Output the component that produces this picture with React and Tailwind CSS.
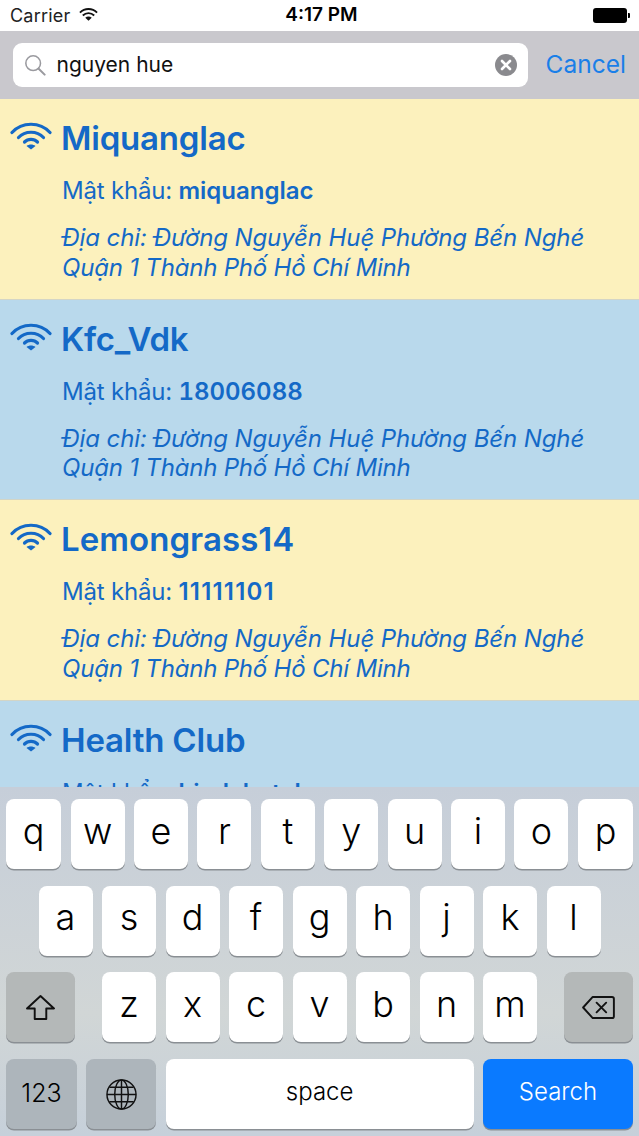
const FONT = "font-['Inter','Noto_Sans',sans-serif]";

function Wifi({ className }) {
  return (
    <svg viewBox="0 0 42 28" className={className} fill="none" stroke="currentColor" strokeWidth="3.200" strokeLinecap="round">
      <path d="M2 10.500 C12 -0.500 30 -0.500 40 10.500" />
      <path d="M8.500 15.500 C15 8.500 27 8.500 33.500 15.500" />
      <path d="M14.500 20 C18 16.500 24 16.500 27.500 20" />
      <path d="M21 27.500 L16.500 24 C19 22 23 22 25.500 24 Z" fill="currentColor" stroke="none" />
    </svg>
  );
}

function Row({ bg, name, pass, passClass = "tracking-normal", nameClass = "tracking-[-0.2px]" }) {
  return (
    <div className={`${bg} h-[200.7px] shrink-0 pl-[10px] pt-[19px] flex gap-[10px] border-b border-[#d3d5c6]`}>
      <Wifi className="w-[42px] h-[28px] mt-[4px] text-[#1469c7] shrink-0" />
      <div className="text-[#1469c7]">
        <div className={`text-[33px] leading-[40px] font-semibold -ml-[1px] ${nameClass}`}>{name}</div>
        <div className="text-[24px] leading-[30px] mt-[18px] tracking-[-0.2px]">
          Mật khẩu: <span className={`font-semibold ${passClass}`}>{pass}</span>
        </div>
        <div className="text-[24px] leading-[29.500px] italic mt-[17px] tracking-[-0.1px]">
          <div>Địa chỉ: Đường Nguyễn Huệ Phường Bến Nghé</div>
          <div className="tracking-[-0.2px]">Quận 1 Thành Phố Hồ Chí Minh</div>
        </div>
      </div>
    </div>
  );
}

function Key({ c, className = "w-[54px]" }) {
  return (
    <div className={`${className} h-[70px] bg-white rounded-[8px] shadow-[0_1.500px_0_#8a8f94] flex items-center justify-center text-[36px] font-light text-black pb-[7px]`}>
      {c}
    </div>
  );
}

function Gray({ className, children }) {
  return (
    <div className={`${className} h-[70px] rounded-[8px] shadow-[0_1.500px_0_#8a8f94] flex items-center justify-center text-black`}>
      {children}
    </div>
  );
}

export default function App() {
  return (
    <div className={`${FONT} w-[639px] h-[1136px] overflow-hidden flex flex-col bg-white`}>
      {/* Status bar */}
      <div className="h-[31px] shrink-0 bg-white flex items-center justify-between pl-[10px] pr-[9px] text-black">
        <div className="flex items-center gap-[9px] w-[200px]">
          <span className="text-[18px] tracking-[0.2px] text-[#222]">Carrier</span>
          <svg viewBox="0 0 20 15" className="w-[19px] h-[15px] -mt-[2px]" fill="none" stroke="#111" strokeWidth="2">
            <path d="M1 5.500 C6 0.500 14 0.500 19 5.500" />
            <path d="M4 8.500 C7.500 5.300 12.500 5.300 16 8.500" />
            <path d="M10 14 L6.600 10.800 C8.500 9.300 11.500 9.300 13.400 10.800 Z" fill="#111" stroke="none" />
          </svg>
        </div>
        <span className="text-[19px] font-semibold ml-[3px]">4:17 PM</span>
        <div className="w-[200px] flex justify-end items-center">
          <div className="w-[34px] h-[15px] bg-black rounded-[3px]" />
          <div className="w-[2px] h-[5px] bg-black rounded-r-[1px] ml-[1px]" />
        </div>
      </div>

      {/* Search bar */}
      <div className="h-[68px] shrink-0 bg-[#c9c8cd] flex items-center pl-[12.500px] gap-[18px]">
        <div className="w-[515px] h-[44px] bg-white rounded-[9px] flex items-center pl-[11px] pr-[11px]">
          <svg viewBox="0 0 24 24" className="w-[22px] h-[22px] shrink-0" fill="none" stroke="#9a9a9f" strokeWidth="1.700" strokeLinecap="round">
            <circle cx="10" cy="10" r="8" />
            <path d="M16 16 L22.500 22.500" strokeWidth="2.200" />
          </svg>
          <span className="ml-[11px] text-[21px] text-[#111] flex-1">nguyen hue</span>
          <svg viewBox="0 0 22 22" className="w-[22px] h-[22px] shrink-0">
            <circle cx="11" cy="11" r="11" fill="#8a8a8e" />
            <path d="M7 7 L15 15 M15 7 L7 15" stroke="white" strokeWidth="2.600" strokeLinecap="round" />
          </svg>
        </div>
        <span className="text-[24.500px] text-[#1a7fe8] -mt-[2px]">Cancel</span>
      </div>

      {/* Result list */}
      <div className="flex-1 min-h-0 overflow-hidden">
        <Row bg="bg-[#fcf1bd]" name="Miquanglac" pass="miquanglac" />
        <Row bg="bg-[#b9d9ec]" name="Kfc_Vdk" pass="18006088" passClass="tracking-normal tabular-nums" />
        <Row bg="bg-[#fcf1bd]" name="Lemongrass14" nameClass="tracking-[0.05px]" pass="11111101" passClass="tracking-[1.200px]" />
        <Row bg="bg-[#b9d9ec]" name="Health Club" pass="hirelahotel" />
      </div>

      {/* Keyboard */}
      <div className="h-[349px] shrink-0 bg-gradient-to-b from-[#c6ced9] via-[#d1d6d6] via-65% to-[#c6d0da] flex flex-col items-center pt-[12px] gap-[16.700px]">
        <div className="flex gap-[9.400px] justify-center w-full">
          {"qwertyuiop".split("").map((c, i) => (
            <Key key={c} c={c} className={i === 0 || i === 9 ? "w-[55.500px]" : "w-[54px]"} />
          ))}
        </div>
        <div className="flex justify-center gap-[9.500px]">
          {"asdfghjkl".split("").map((c) => <Key key={c} c={c} />)}
        </div>
        <div className="flex w-full px-[6px] justify-between items-center">
          <Gray className="w-[69px] bg-[#b4b8b8]">
            <svg viewBox="0 0 32 28" className="w-[31px] h-[27px]" fill="none" stroke="#111" strokeWidth="2" strokeLinejoin="round">
              <path d="M16 2 L30 15 L22 15 L22 26 L10 26 L10 15 L2 15 Z" />
            </svg>
          </Gray>
          <div className="flex gap-[9.500px]">
            {"zxcvbnm".split("").map((c) => <Key key={c} c={c} />)}
          </div>
          <Gray className="w-[69px] bg-[#b4b8b8]">
            <svg viewBox="0 0 36 26" className="w-[35px] h-[25px]" fill="none" stroke="#111" strokeWidth="2" strokeLinejoin="round" strokeLinecap="round">
              <path d="M12 2 L32 2 Q34 2 34 4 L34 22 Q34 24 32 24 L12 24 L2 13 Z" />
              <path d="M16 8 L26 18 M26 8 L16 18" />
            </svg>
          </Gray>
        </div>
        <div className="flex w-full px-[6px] justify-between">
          <Gray className="w-[71px] bg-[#adb5bb] text-[25px] font-light">123</Gray>
          <Gray className="w-[70px] bg-[#adb5bb]">
            <svg viewBox="0 0 32 32" className="w-[31px] h-[31px]" fill="none" stroke="#111" strokeWidth="1.500">
              <circle cx="16" cy="16" r="15" />
              <ellipse cx="16" cy="16" rx="7" ry="15" />
              <path d="M16 1 V31 M1 16 H31 M3.500 8.500 H28.500 M3.500 23.500 H28.500" />
            </svg>
          </Gray>
          <div className="w-[308px] h-[70px] bg-white rounded-[8px] shadow-[0_1.500px_0_#8a8f94] flex items-center justify-center text-[24px] font-light text-black pb-[5px]">space</div>
          <div className="w-[150px] h-[70px] bg-[#0a7aff] rounded-[8px] shadow-[0_1.500px_0_#8a8f94] flex items-center justify-center text-[24px] font-light text-white pb-[5px]">Search</div>
        </div>
      </div>
    </div>
  );
}
